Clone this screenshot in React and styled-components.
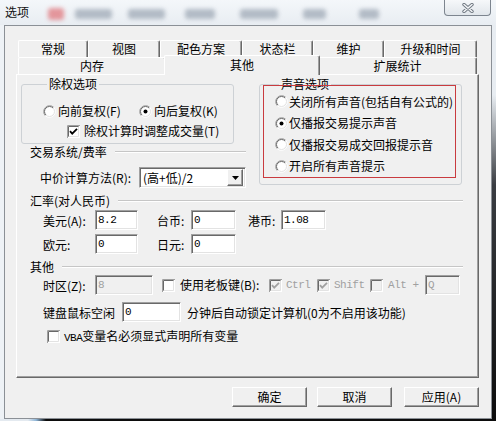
import React from "react";
import styled, { createGlobalStyle } from "styled-components";

const GlobalStyle = createGlobalStyle`
  html, body {
    margin: 0;
    padding: 0;
    background: #111;
  }
  body {
    font-family: "Noto Sans CJK SC", "Noto Sans", sans-serif;
    font-size: 12px;
    color: #000;
  }
  * {
    box-sizing: border-box;
  }
`;

const Window = styled.div`
  width: 496px;
  height: 421px;
  display: flex;
  flex-direction: column;
  overflow: hidden;
  background: #edf1f5;
`;

const TitleBar = styled.div`
  height: 25px;
  flex: none;
  display: flex;
  align-items: flex-start;
  background: linear-gradient(#f4f7fa, #e8edf2);
`;

const Title = styled.div`
  width: 30px;
  padding: 4px 0 0 5px;
  line-height: 15px;
  font-size: 12px;
  color: #111;
  flex: none;
`;

const Blob = styled.div`
  flex: none;
  width: ${(p) => p.$w}px;
  height: ${(p) => p.$h || 10}px;
  margin: ${(p) => p.$mt || 9}px 0 0 ${(p) => p.$ml}px;
  background: ${(p) => p.$c || "#9fa9b6"};
  border-radius: 3px;
  filter: blur(2px);
  opacity: 0.75;
`;

const CloseButton = styled.div`
  margin-left: auto;
  margin-right: 5px;
  width: 47px;
  height: 16px;
  flex: none;
  display: flex;
  align-items: center;
  justify-content: center;
  border: 1px solid #7d858f;
  border-top: none;
  border-radius: 0 0 4px 4px;
  background: linear-gradient(#f6f8fa, #e1e6eb);
`;

const Middle = styled.div`
  flex: 1;
  display: flex;
`;

const SideFrame = styled.div`
  width: 4px;
  flex: none;
  background: ${(p) =>
    p.$right
      ? "linear-gradient(#e8edf2 0, #e8edf2 70px, #3a3d42 160px, #0c0c0c 100%)"
      : "#eef2f6"};
`;

const BottomFrame = styled.div`
  height: 2px;
  flex: none;
  background: linear-gradient(to right, #e4eaf0 0, #e4eaf0 28px, #8fb6d8 36px, #0c0c0c 46px, #0c0c0c 100%);
`;

const Client = styled.div`
  width: 488px;
  flex: none;
  border: 1px solid #8b9096;
  background: #f0f0f0;
  padding: 14px 12px 0 11px;
  display: flex;
  flex-direction: column;
`;

const TabControl = styled.div`
  width: 463px;
  display: flex;
  flex-direction: column;
`;

const TabRow = styled.div`
  display: flex;
  padding: 0 2px;
  height: 17px;
`;

const Tab = styled.div`
  width: ${(p) => p.$w}px;
  flex: none;
  height: ${(p) => (p.$active ? 20 : 17)}px;
  margin: ${(p) => (p.$active ? "-2px -2px 0" : "0")};
  position: ${(p) => (p.$active ? "relative" : "static")};
  z-index: ${(p) => (p.$active ? 1 : "auto")};
  border-top: 1px solid #fff;
  border-left: 1px solid #fff;
  border-right: 1px solid #696969;
  box-shadow: inset -1px 0 #a0a0a0;
  border-radius: 2px 2px 0 0;
  background: #f0f0f0;
  text-align: center;
  line-height: ${(p) => (p.$active ? 18 : 16)}px;
  white-space: nowrap;
`;

const Panel = styled.div`
  height: 304px;
  border: 1px solid;
  border-color: #fff #696969 #696969 #fff;
  box-shadow: inset -1px -1px #a0a0a0;
  padding: 2px 15px 0 4px;
  display: flex;
  flex-direction: column;
`;

const TopArea = styled.div`
  display: flex;
  align-items: flex-start;
`;

const Column = styled.div`
  width: ${(p) => p.$w}px;
  margin-left: ${(p) => p.$ml || 0}px;
  flex: none;
  display: flex;
  flex-direction: column;
  position: relative;
`;

const Group = styled.fieldset`
  width: ${(p) => p.$w}px;
  margin: 0;
  padding: ${(p) => p.$pad};
  min-width: 0;
  border: 1px solid #cdd1d5;
  border-radius: 3px;
`;

const Legend = styled.legend`
  margin-left: 4px;
  padding: 0 2px;
  line-height: 14px;
  font-size: 12px;
`;

const Annotation = styled.div`
  position: absolute;
  left: 4px;
  top: 8px;
  width: 193px;
  height: 93px;
  border: 1px solid #c93b3f;
  pointer-events: none;
`;

const Row = styled.div`
  display: flex;
  align-items: center;
  height: ${(p) => p.$h || 20}px;
  margin-top: ${(p) => p.$mt || 0}px;
  padding-left: ${(p) => p.$pl || 0}px;
  white-space: nowrap;
  flex: none;
`;

const SectionHeader = styled.div`
  display: flex;
  align-items: center;
  height: 14px;
  margin-top: ${(p) => p.$mt || 0}px;
  padding-left: 9px;
  line-height: 14px;
  white-space: nowrap;
`;

const HeaderLine = styled.div`
  flex: 1;
  margin-left: 8px;
  height: 2px;
  border-top: 1px solid #c6c6c6;
  border-bottom: 1px solid #fff;
`;

const FieldLabel = styled.span`
  width: ${(p) => p.$w}px;
  margin-left: ${(p) => p.$ml || 0}px;
  flex: none;
  color: ${(p) => (p.$disabled ? "#a0a0a0" : "#000")};
`;

const Input = styled.div`
  width: ${(p) => p.$w}px;
  height: 20px;
  margin-left: ${(p) => p.$ml || 0}px;
  flex: none;
  border: 1px solid;
  border-color: #a0a0a0 #fff #fff #a0a0a0;
  box-shadow: inset 1px 1px #696969, inset -1px -1px #e3e3e3;
  background: ${(p) => (p.$disabled ? "#f0f0f0" : "#fff")};
  color: ${(p) => (p.$disabled ? "#a0a0a0" : "#000")};
  padding: 2px 0 0 2px;
  font-family: "Liberation Mono", monospace;
  font-size: 11px;
  letter-spacing: -0.5px;
  line-height: 14px;
`;

const Dropdown = styled.div`
  width: 107px;
  height: 21px;
  flex: none;
  display: flex;
  align-items: center;
  border: 1px solid;
  border-color: #a0a0a0 #fff #fff #a0a0a0;
  box-shadow: inset 1px 1px #696969, inset -1px -1px #e3e3e3;
  background: #fff;
  padding: 2px 2px 2px 3px;
`;

const DropValue = styled.span`
  flex: 1;
  line-height: 14px;
`;

const ArrowButton = styled.div`
  width: 16px;
  height: 17px;
  display: flex;
  align-items: center;
  justify-content: center;
  border: 1px solid;
  border-color: #fff #696969 #696969 #fff;
  box-shadow: inset -1px -1px #a0a0a0;
  background: #f0f0f0;
`;

const Option = styled.label`
  display: flex;
  align-items: center;
  width: ${(p) => (p.$w ? `${p.$w}px` : "auto")};
  height: ${(p) => p.$h || 14}px;
  margin-left: ${(p) => p.$ml || 0}px;
  flex: none;
  white-space: nowrap;
  color: ${(p) => (p.$disabled ? "#a0a0a0" : "#000")};
`;

const OptionText = styled.span`
  margin-left: ${(p) => p.$gap || 3}px;
  line-height: 14px;
  font-family: ${(p) =>
    p.$mono ? '"Liberation Mono", monospace' : "inherit"};
  font-size: ${(p) => (p.$mono ? "11px" : "12px")};
  letter-spacing: ${(p) => (p.$mono ? "-0.5px" : "0")};
`;

const Mono = styled.span`
  font-family: "Liberation Mono", monospace;
  font-size: 11px;
  letter-spacing: -0.5px;
`;

const ButtonRow = styled.div`
  display: flex;
  justify-content: flex-end;
  margin-top: 9px;
`;

const Button = styled.div`
  width: 75px;
  height: 20px;
  margin-left: ${(p) => p.$ml || 0}px;
  border: 1px solid;
  border-color: #fff #696969 #696969 #fff;
  box-shadow: inset -1px -1px #a0a0a0;
  background: #f0f0f0;
  display: flex;
  align-items: center;
  justify-content: center;
  line-height: 14px;
`;

const Radio = ({ checked }) => (
  <svg width="13" height="13" viewBox="0 0 13 13">
    <circle cx="6.5" cy="6.5" r="5.5" fill="#fff" />
    <path d="M2.26 10.74 A6 6 0 0 1 10.74 2.26" fill="none" stroke="#a0a0a0" />
    <path d="M10.74 2.26 A6 6 0 0 1 2.26 10.74" fill="none" stroke="#fff" />
    <path d="M2.96 10.04 A5 5 0 0 1 10.04 2.96" fill="none" stroke="#696969" />
    <path d="M10.04 2.96 A5 5 0 0 1 2.96 10.04" fill="none" stroke="#e3e3e3" />
    {checked && <circle cx="6.5" cy="6.5" r="2" fill="#000" />}
  </svg>
);

const Check = ({ checked, disabled }) => (
  <svg width="13" height="13" viewBox="0 0 13 13">
    <rect x="0" y="0" width="13" height="13" fill="#fff" />
    <rect x="2" y="2" width="9" height="9" fill={disabled ? "#f0f0f0" : "#fff"} />
    <path d="M0.5 13 V0.5 H13" fill="none" stroke="#a0a0a0" />
    <path d="M1.5 12 V1.5 H12" fill="none" stroke="#696969" />
    <path d="M1.5 11.5 H11.5 V1.5" fill="none" stroke="#e3e3e3" />
    {checked && (
      <path
        d="M3 6.2 L5.2 8.6 L10 3.8"
        fill="none"
        stroke={disabled ? "#a0a0a0" : "#000"}
        strokeWidth="1.8"
      />
    )}
  </svg>
);

const rowOneTabs = [
  { label: "常规", w: 70 },
  { label: "视图", w: 72 },
  { label: "配色方案", w: 82 },
  { label: "状态栏", w: 71 },
  { label: "维护", w: 71 },
  { label: "升级和时间", w: 93 },
];

const rowTwoTabs = [
  { label: "内存", w: 148 },
  { label: "其他", w: 156, active: true },
  { label: "扩展统计", w: 159 },
];

// blurred shapes seen through the glass title bar
const blobs = [
  { w: 16, ml: 18, c: "#e0787e", h: 12, mt: 8 },
  { w: 37, ml: 11 },
  { w: 37, ml: 16 },
  { w: 30, ml: 20 },
  { w: 38, ml: 25 },
  { w: 23, ml: 25 },
  { w: 20, ml: 33 },
];

const soundOptions = [
  { label: "关闭所有声音(包括自有公式的)", checked: false },
  { label: "仅播报交易提示声音", checked: true },
  { label: "仅播报交易成交回报提示音", checked: false },
  { label: "开启所有声音提示", checked: false },
];

export default function App() {
  return (
    <>
      <GlobalStyle />
      <Window>
        <TitleBar>
          <Title>选项</Title>
          {blobs.map((b, i) => (
            <Blob key={i} $w={b.w} $ml={b.ml} $c={b.c} $h={b.h} $mt={b.mt} />
          ))}
          <CloseButton>
            <svg width="14" height="10" viewBox="0 0 14 10">
              <path d="M3 1.5 L11 8.5 M11 1.5 L3 8.5" stroke="#6f7780" strokeWidth="3.4" strokeLinecap="round" />
              <path d="M3 1.5 L11 8.5 M11 1.5 L3 8.5" stroke="#f4f6f8" strokeWidth="1.6" strokeLinecap="round" />
            </svg>
          </CloseButton>
        </TitleBar>

        <Middle>
          <SideFrame />
          <Client>
            <TabControl>
              <TabRow>
                {rowOneTabs.map((t) => (
                  <Tab key={t.label} $w={t.w}>
                    {t.label}
                  </Tab>
                ))}
              </TabRow>
              <TabRow>
                {rowTwoTabs.map((t) => (
                  <Tab key={t.label} $w={t.w} $active={t.active}>
                    {t.label}
                  </Tab>
                ))}
              </TabRow>

              <Panel>
                <TopArea>
                  <Column $w={225}>
                    <Group $w={213} $pad="0 0 5px 21px">
                      <Legend>除权选项</Legend>
                      <Row $h={14} $mt={13}>
                        <Option $w={96}>
                          <Radio />
                          <OptionText $gap={2}>向前复权(F)</OptionText>
                        </Option>
                        <Option>
                          <Radio checked />
                          <OptionText $gap={2}>向后复权(K)</OptionText>
                        </Option>
                      </Row>
                      <Row $h={14} $mt={6} $pl={24}>
                        <Option>
                          <Check checked />
                          <OptionText $gap={4}>除权计算时调整成交量(T)</OptionText>
                        </Option>
                      </Row>
                    </Group>

                    <SectionHeader $mt={1}>
                      交易系统/费率
                      <HeaderLine />
                    </SectionHeader>

                    <Row $h={21} $mt={8} $pl={19}>
                      <FieldLabel $w={99}>中价计算方法(R):</FieldLabel>
                      <Dropdown>
                        <DropValue>(高+低)/2</DropValue>
                        <ArrowButton>
                          <svg width="7" height="4" viewBox="0 0 7 4">
                            <path d="M0 0 H7 L3.5 4 Z" fill="#000" />
                          </svg>
                        </ArrowButton>
                      </Dropdown>
                    </Row>
                  </Column>

                  <Column $w={203} $ml={13}>
                    <Group $w={203} $pad="0 0 7px 15px">
                      <Legend>声音选项</Legend>
                      {soundOptions.map((o) => (
                        <Option key={o.label} $h={21.5}>
                          <Radio checked={o.checked} />
                          <OptionText $gap={1}>{o.label}</OptionText>
                        </Option>
                      ))}
                    </Group>
                    <Annotation />
                  </Column>
                </TopArea>

                <SectionHeader $mt={6}>
                  汇率(对人民币)
                  <HeaderLine />
                </SectionHeader>

                <Row $mt={2} $pl={22}>
                  <FieldLabel $w={52}>美元(A):</FieldLabel>
                  <Input $w={43}>8.2</Input>
                  <FieldLabel $w={34} $ml={19}>台币:</FieldLabel>
                  <Input $w={45}>0</Input>
                  <FieldLabel $w={33} $ml={12}>港币:</FieldLabel>
                  <Input $w={45}>1.08</Input>
                </Row>

                <Row $mt={4} $pl={22}>
                  <FieldLabel $w={52}>欧元:</FieldLabel>
                  <Input $w={43}>0</Input>
                  <FieldLabel $w={34} $ml={19}>日元:</FieldLabel>
                  <Input $w={45}>0</Input>
                </Row>

                <SectionHeader $mt={6}>
                  其他
                  <HeaderLine />
                </SectionHeader>

                <Row $mt={1} $pl={22}>
                  <FieldLabel $w={52}>时区(Z):</FieldLabel>
                  <Input $w={58} $disabled>8</Input>
                  <Option $w={107} $ml={9}>
                    <Check />
                    <OptionText $gap={5}>使用老板键(B):</OptionText>
                  </Option>
                  <Option $w={48} $disabled>
                    <Check checked disabled />
                    <OptionText $gap={4} $mono>Ctrl</OptionText>
                  </Option>
                  <Option $w={53} $disabled>
                    <Check checked disabled />
                    <OptionText $gap={4} $mono>Shift</OptionText>
                  </Option>
                  <Option $w={55} $disabled>
                    <Check disabled />
                    <OptionText $gap={5} $mono>Alt +</OptionText>
                  </Option>
                  <Input $w={35} $disabled>Q</Input>
                </Row>

                <Row $mt={7} $pl={22}>
                  <FieldLabel $w={79}>键盘鼠标空闲</FieldLabel>
                  <Input $w={59}>0</Input>
                  <FieldLabel $w={250} $ml={6}>
                    分钟后自动锁定计算机(0为不启用该功能)
                  </FieldLabel>
                </Row>

                <Row $h={13} $mt={8} $pl={26}>
                  <Option $h={13}>
                    <Check />
                    <OptionText $gap={4}>
                      <Mono>VBA</Mono>变量名必须显式声明所有变量
                    </OptionText>
                  </Option>
                </Row>
              </Panel>
            </TabControl>

            <ButtonRow>
              <Button>确定</Button>
              <Button $ml={10}>取消</Button>
              <Button $ml={12}>应用(A)</Button>
            </ButtonRow>
          </Client>
          <SideFrame $right />
        </Middle>
        <BottomFrame />
      </Window>
    </>
  );
}
